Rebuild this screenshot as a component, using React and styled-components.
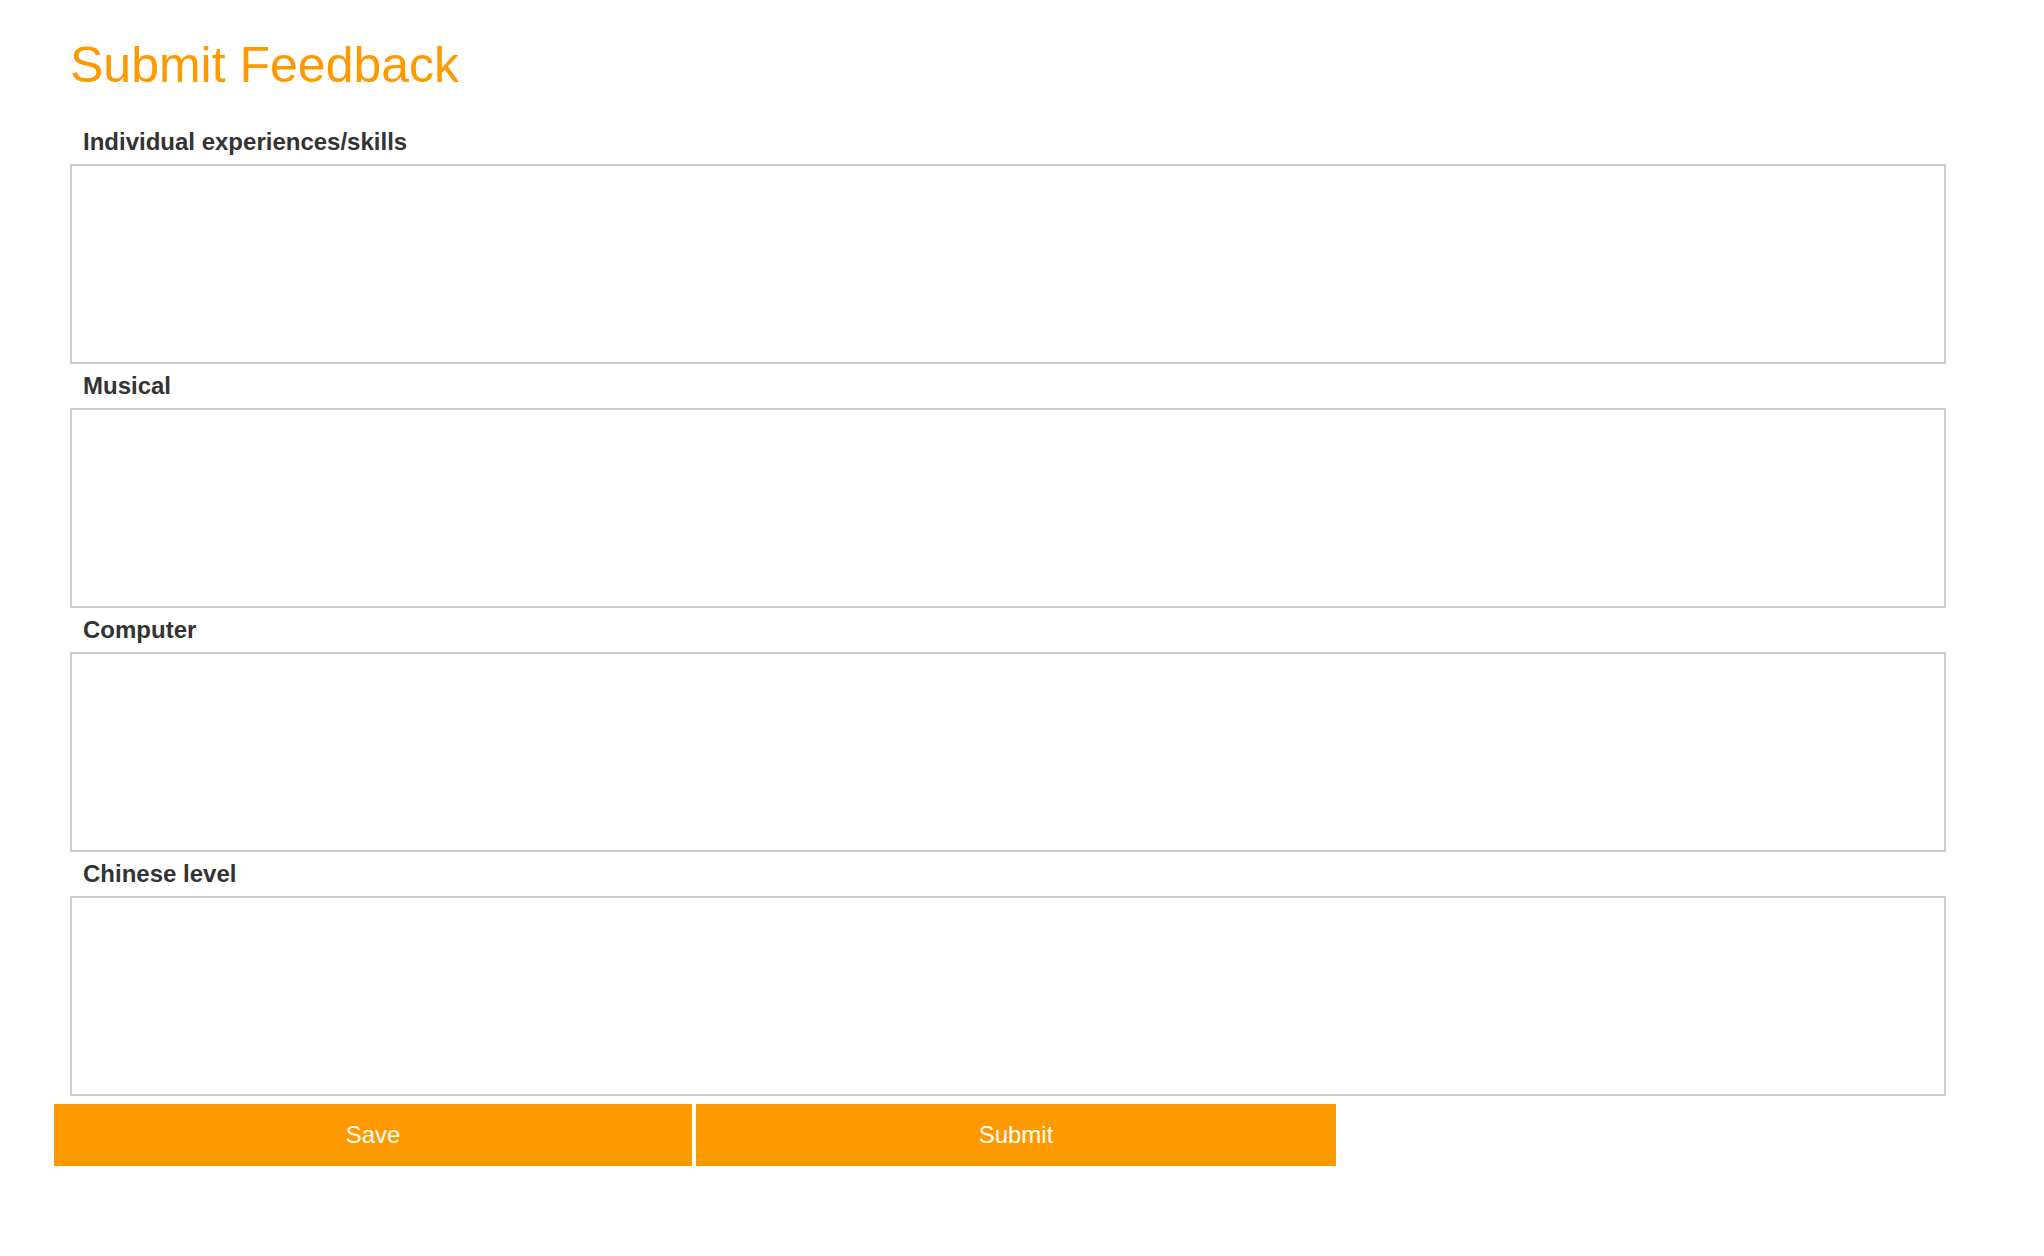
import React from "react";
import styled, { createGlobalStyle } from "styled-components";

const GlobalStyle = createGlobalStyle`
  html, body {
    margin: 0;
    padding: 0;
    background: #ffffff;
  }
  body {
    font-family: "Liberation Sans", Arial, Helvetica, sans-serif;
  }
  * { box-sizing: border-box; }
`;

const Page = styled.div`
  padding: 36px 98px 60px 54px;
`;

const Form = styled.form`
  display: flex;
  flex-direction: column;
`;

const Fields = styled.div`
  padding-left: 16px;
  display: flex;
  flex-direction: column;
`;

const Title = styled.h1`
  margin: 0 0 34px;
  font-size: 50px;
  line-height: 58px;
  font-weight: normal;
  color: #ff9900;
`;

const Label = styled.label`
  display: block;
  margin: ${(p) => (p.$first ? "0" : "8px")} 0 8px;
  padding-left: 13px;
  font-size: 24px;
  line-height: 28px;
  font-weight: bold;
  color: #333333;
`;

const TextArea = styled.textarea`
  display: block;
  width: 100%;
  height: 200px;
  margin: 0;
  padding: 6px;
  border: 2px solid #cccccc;
  border-radius: 0;
  background: #ffffff;
  resize: none;
  font-family: "Liberation Sans", Arial, sans-serif;
  font-size: 20px;
  outline: none;
`;

const Actions = styled.div`
  display: flex;
  gap: 4px;
  margin-top: 8px;
`;

const Button = styled.button`
  width: ${(p) => p.$width}px;
  height: 62px;
  border: none;
  border-radius: 0;
  background: #ff9900;
  color: #ffffff;
  font-family: "Liberation Sans", Arial, sans-serif;
  font-size: 24px;
  cursor: pointer;
  padding: 0;
`;

const fields = [
  { id: "skills", label: "Individual experiences/skills" },
  { id: "musical", label: "Musical" },
  { id: "computer", label: "Computer" },
  { id: "chinese", label: "Chinese level" },
];

export default function App() {
  return (
    <>
      <GlobalStyle />
      <Page>
        <Form onSubmit={(e) => e.preventDefault()}>
          <Fields>
            <Title>Submit Feedback</Title>
            {fields.map((f, i) => (
              <React.Fragment key={f.id}>
                <Label htmlFor={f.id} $first={i === 0}>
                  {f.label}
                </Label>
                <TextArea id={f.id} />
              </React.Fragment>
            ))}
          </Fields>
          <Actions>
            <Button type="button" $width={638}>Save</Button>
            <Button type="submit" $width={640}>Submit</Button>
          </Actions>
        </Form>
      </Page>
    </>
  );
}
